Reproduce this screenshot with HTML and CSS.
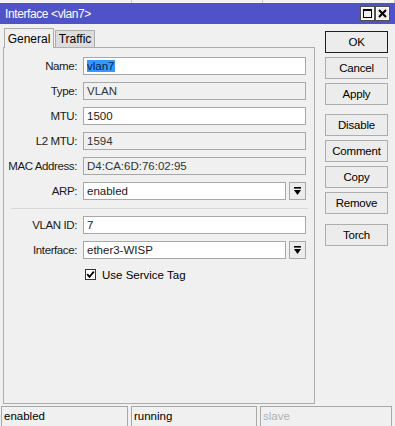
FILE: index.html
```html
<!DOCTYPE html>
<html>
<head>
<meta charset="utf-8">
<link rel="stylesheet" href="styles.css">
</head>
<body>
<div class="window">
  <div class="topstrip"><span></span><span></span><span></span></div>
  <div class="titlebar">
    <span class="title">Interface &lt;vlan7&gt;</span>
    <div class="winbtns">
      <span class="wb"><svg width="11" height="11" viewBox="0 0 11 11"><rect x="1.5" y="1.5" width="8" height="8" fill="none" stroke="#000" stroke-width="1"/><line x1="1.5" y1="2" x2="9.5" y2="2" stroke="#000" stroke-width="2"/></svg></span>
      <span class="wb"><svg width="11" height="11" viewBox="0 0 11 11"><path d="M2 2 L9 9 M9 2 L2 9" stroke="#000" stroke-width="2"/></svg></span>
    </div>
  </div>
  <div class="main">
    <div class="left">
      <div class="tabs">
        <div class="tab active">General</div>
        <div class="tab">Traffic</div>
      </div>
      <div class="panel">
        <div class="row"><label>Name:</label><div class="field edit"><span class="sel">vlan7</span></div></div>
        <div class="row"><label>Type:</label><div class="field ro">VLAN</div></div>
        <div class="row"><label>MTU:</label><div class="field edit">1500</div></div>
        <div class="row"><label>L2 MTU:</label><div class="field ro">1594</div></div>
        <div class="row"><label>MAC Address:</label><div class="field ro">D4:CA:6D:76:02:95</div></div>
        <div class="row"><label>ARP:</label><div class="field edit short">enabled</div><div class="dd"><svg width="9" height="9" viewBox="0 0 9 9"><rect x="1" y="0" width="7" height="1.6" fill="#000"/><path d="M1 3 H8 L4.5 8 Z" fill="#000"/></svg></div></div>
        <div class="sep"></div>
        <div class="row"><label>VLAN ID:</label><div class="field edit">7</div></div>
        <div class="row"><label>Interface:</label><div class="field edit short">ether3-WISP</div><div class="dd"><svg width="9" height="9" viewBox="0 0 9 9"><rect x="1" y="0" width="7" height="1.6" fill="#000"/><path d="M1 3 H8 L4.5 8 Z" fill="#000"/></svg></div></div>
        <div class="checkrow"><span class="cb"><svg width="9" height="9" viewBox="0 0 9 9"><path d="M1.2 4.2 L3.5 6.8 L7.8 1.6" fill="none" stroke="#000" stroke-width="1.8"/></svg></span><span>Use Service Tag</span></div>
      </div>
    </div>
    <div class="buttons">
      <div class="btn default">OK</div>
      <div class="btn">Cancel</div>
      <div class="btn">Apply</div>
      <div class="btn gap1">Disable</div>
      <div class="btn">Comment</div>
      <div class="btn">Copy</div>
      <div class="btn">Remove</div>
      <div class="btn gap2">Torch</div>
    </div>
  </div>
  <div class="status">
    <div class="cell c1">enabled</div>
    <div class="cell c2">running</div>
    <div class="cell c3 dim">slave</div>
  </div>
</div>
</body>
</html>
```
FILE: styles.css
```css
html, body {
  margin: 0;
  padding: 0;
  background: #f0f0f0;
}
body {
  font-family: "Liberation Sans", Arial, sans-serif;
  font-size: 11px;
  color: #000;
}
.window {
  width: 395px;
  height: 426px;
  overflow: hidden;
  background: #f0f0f0;
  display: flex;
  flex-direction: column;
}
.topstrip {
  height: 3px;
  background: #f3f3f3;
  display: flex;
}
.topstrip span {
  flex: 1;
  border-right: 1px solid #c8c8c8;
}
.titlebar {
  height: 21px;
  background: #5053c8;
  color: #fff;
  display: flex;
  align-items: center;
  justify-content: space-between;
  padding-left: 5px;
  padding-right: 6px;
}
.title {
  font-size: 12px;
  letter-spacing: -0.4px;
}
.winbtns {
  display: flex;
  gap: 2px;
}
.wb {
  width: 13px;
  height: 13px;
  box-sizing: border-box;
  background: #f0f0f0;
  border: 1px solid #fff;
  outline: 1px solid #505050;
  display: flex;
  align-items: center;
  justify-content: center;
}
.main {
  display: flex;
  height: 380px;
}
.left {
  margin-left: 3px;
  width: 312px;
  display: flex;
  flex-direction: column;
}
.tabs {
  display: flex;
  align-items: flex-end;
  height: 23px;
  padding-left: 1px;
}
.tab {
  box-sizing: border-box;
  border: 1px solid #adadad;
  border-bottom: none;
  height: 17px;
  line-height: 16px;
  background: #dcdcdc;
  margin-left: 1px;
  width: 40px;
  padding: 0;
  text-align: center;
  font-size: 12px;
}
.tab.active {
  background: #f0f0f0;
  height: 20px;
  line-height: 20px;
  width: 50px;
  margin-left: 0;
  margin-bottom: -1px;
  position: relative;
  z-index: 1;
}
.panel {
  flex: 1;
  border: 1px solid #adadad;
  box-sizing: border-box;
  padding-top: 9px;
  display: flex;
  flex-direction: column;
  gap: 7px;
}
.row {
  display: flex;
  align-items: center;
  height: 18px;
}
.row label {
  width: 73px;
  flex: none;
  text-align: right;
  padding-right: 6px;
  font-size: 11.5px;
  white-space: nowrap;
  letter-spacing: -0.4px;
  color: #1a1a1a;
}
.field {
  box-sizing: border-box;
  height: 18px;
  width: 223px;
  border: 1px solid #a8a8a8;
  padding-left: 3px;
  line-height: 16px;
  font-size: 11.5px;
  color: #1a1a1a;
  white-space: nowrap;
}
.field.edit {
  background: #fff;
}
.field.ro {
  background: #f0f0f0;
  color: #333;
}
.field.short {
  width: 203px;
}
.sel {
  background: #3399ff;
  color: #0b1d4a;
}
.dd {
  box-sizing: border-box;
  width: 17px;
  height: 18px;
  margin-left: 3px;
  border: 1px solid #a8a8a8;
  background: #ececec;
  display: flex;
  align-items: center;
  justify-content: center;
}
.sep {
  height: 1px;
  background: #d8d8d8;
  margin: 1px 6px 0 7px;
}
.checkrow {
  display: flex;
  align-items: center;
  gap: 6px;
  padding-left: 81px;
  height: 13px;
  margin-top: 2px;
  font-size: 11.5px;
}
.cb {
  box-sizing: border-box;
  width: 11px;
  height: 11px;
  border: 1px solid #333;
  background: #fff;
  display: flex;
  align-items: center;
  justify-content: center;
}
.buttons {
  margin-left: 10px;
  padding-top: 7px;
  display: flex;
  flex-direction: column;
  gap: 4px;
}
.btn {
  box-sizing: border-box;
  width: 63px;
  height: 22px;
  border: 1px solid #adadad;
  background: #ececec;
  text-align: center;
  line-height: 20px;
  font-size: 11.5px;
  letter-spacing: -0.2px;
}
.btn.default {
  border: 1px solid #1e1e1e;
}
.btn.gap1 {
  margin-top: 5px;
}
.btn.gap2 {
  margin-top: 6px;
}
.status {
  display: flex;
  gap: 3px;
  padding-left: 1px;
  margin-top: 2px;
}
.cell {
  box-sizing: border-box;
  height: 20px;
  border: 1px solid #a8a8a8;
  border-bottom: none;
  padding-left: 2px;
  line-height: 18px;
  font-size: 11.5px;
}
.c1 { width: 127px; }
.c2 { width: 126px; }
.c3 { width: 132px; }
.dim { color: #b0b0b0; }
```
